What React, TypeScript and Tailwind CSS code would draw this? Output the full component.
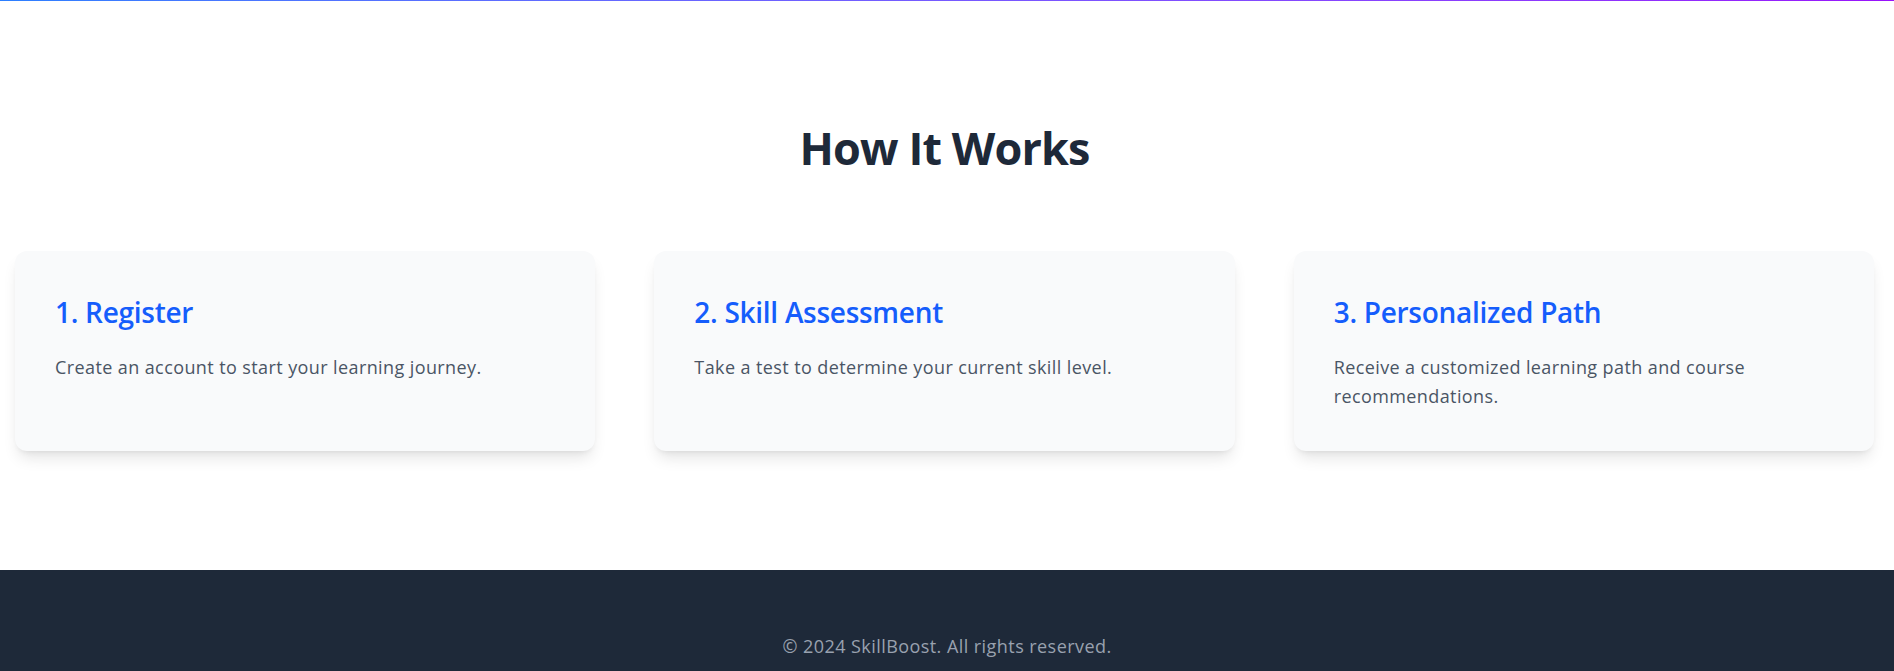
const steps = [
  { title: '1. Register', text: 'Create an account to start your learning journey.' },
  { title: '2. Skill Assessment', text: 'Take a test to determine your current skill level.' },
  { title: '3. Personalized Path', text: 'Receive a customized learning path and course recommendations.' },
];

export default function App() {
  return (
    <div className="min-h-screen bg-white font-['Open_Sans',sans-serif]">
      <div className="h-px bg-gradient-to-r from-blue-500 to-purple-600" />

      <section className="pt-[124px] pb-[119px] pl-[15px] pr-[20px]">
        <h2 className="text-[45px] leading-none tracking-[-0.02em] font-bold text-gray-800 text-center mb-[81px]">
          How It Works
        </h2>
        <div className="grid grid-cols-3 gap-[59px]">
          {steps.map((step) => (
            <div key={step.title} className="bg-gray-50 rounded-xl shadow-lg px-10 pt-[43px] pb-[40px]">
              <h3 className="text-[28px] leading-9 tracking-[-0.01em] font-semibold text-blue-600 mb-[23px]">{step.title}</h3>
              <p className="text-lg leading-[29px] tracking-[0.4px] text-gray-600">{step.text}</p>
            </div>
          ))}
        </div>
      </section>

      <footer className="bg-gray-800 pt-[62px] pb-16 text-center">
        <p className="text-lg leading-7 tracking-[0.44px] text-gray-400">&copy; 2024 SkillBoost. All rights reserved.</p>
      </footer>
    </div>
  );
}
